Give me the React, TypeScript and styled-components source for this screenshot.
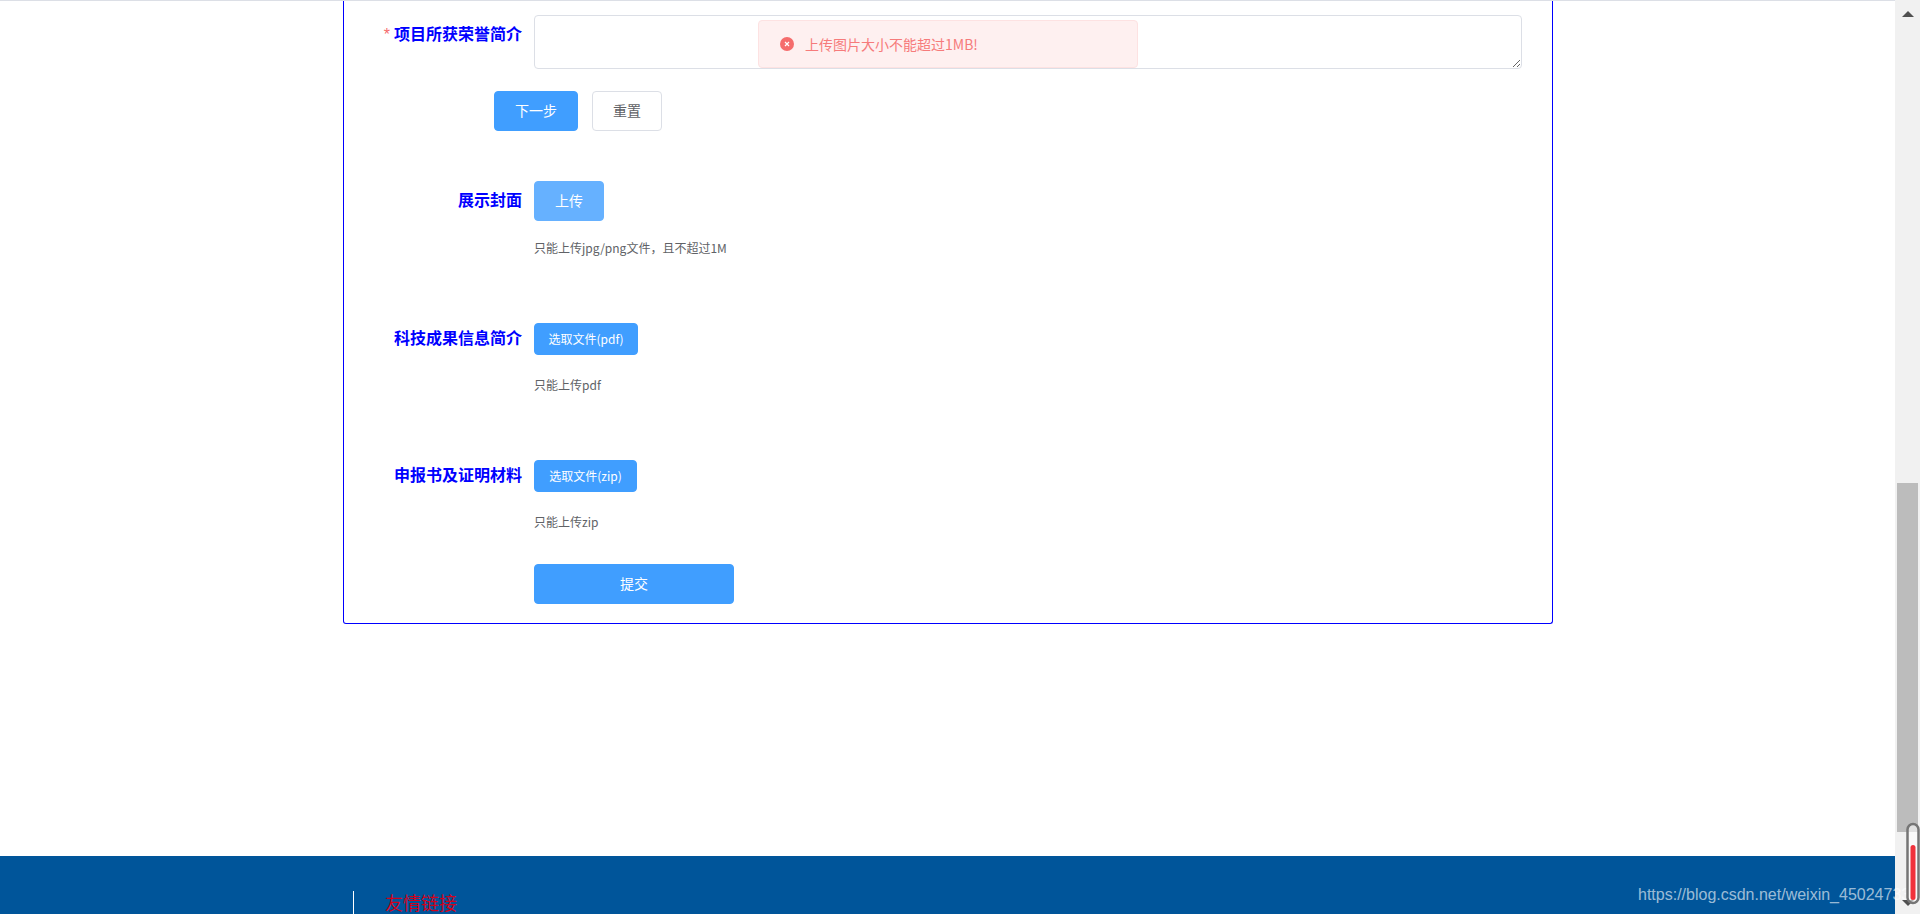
import styled, { createGlobalStyle } from 'styled-components';

const GlobalStyle = createGlobalStyle`
  html, body {
    margin: 0;
    padding: 0;
    height: 100%;
    overflow: hidden;
    background: #fff;
    font-family: "Noto Sans CJK SC", "Noto Sans", sans-serif;
  }
`;

const Page = styled.div`
  position: relative;
  display: flex;
  width: 1920px;
  height: 914px;
  overflow: hidden;
`;

const Main = styled.div`
  flex: 1;
  display: flex;
  flex-direction: column;
  border-top: 1px solid #dcdfe6;
`;

const Card = styled.div`
  box-sizing: border-box;
  width: 1210px;
  margin-left: 343px;
  padding: 14px 30px 19px 0;
  border: 1px solid #0000ff;
  border-top: none;
  border-radius: 0 0 3px 3px;
`;

const Row = styled.div<{ $top?: boolean; $mt?: number }>`
  display: flex;
  align-items: ${(p) => (p.$top ? 'flex-start' : 'center')};
  margin-top: ${(p) => p.$mt ?? 0}px;
`;

const Label = styled.label`
  box-sizing: border-box;
  flex: 0 0 190px;
  padding: 0 12px 3px 0;
  text-align: right;
  font-size: 16px;
  font-weight: 700;
  line-height: 37px;
  color: #0000ff;
`;

const Star = styled.span`
  margin-right: 4px;
  font-family: "Liberation Sans", sans-serif;
  font-weight: 400;
  color: #f56c6c;
`;

const TextArea = styled.textarea`
  box-sizing: border-box;
  display: block;
  flex: 1;
  height: 54px;
  padding: 5px 15px;
  border: 1px solid #dcdfe6;
  border-radius: 4px;
  outline: none;
  background: #fff;
  font-family: inherit;
  font-size: 14px;
`;

const Actions = styled.div`
  display: flex;
  gap: 14px;
  margin-top: 22px;
  padding-left: 150px;
`;

const Button = styled.button<{ $kind?: 'primary' | 'plain' | 'faded'; $w: number; $h?: number; $small?: boolean }>`
  box-sizing: border-box;
  width: ${(p) => p.$w}px;
  height: ${(p) => p.$h ?? 40}px;
  padding: 0 0 2px;
  border: 1px solid
    ${(p) => (p.$kind === 'plain' ? '#dcdfe6' : p.$kind === 'faded' ? '#66b1ff' : '#409eff')};
  border-radius: 4px;
  background: ${(p) => (p.$kind === 'plain' ? '#fff' : p.$kind === 'faded' ? '#66b1ff' : '#409eff')};
  color: ${(p) => (p.$kind === 'plain' ? '#606266' : '#fff')};
  font-family: inherit;
  font-size: ${(p) => (p.$small ? 12 : 14)}px;
`;

const Hint = styled.div<{ $mt: number }>`
  margin-top: ${(p) => p.$mt}px;
  padding-left: 190px;
  font-size: 12px;
  line-height: 20px;
  color: #606266;
`;

const SubmitRow = styled.div`
  margin-top: 32px;
  padding-left: 190px;
`;

const Footer = styled.div`
  flex: 1;
  margin-top: auto;
  max-height: 58px;
  min-height: 58px;
  padding: 35px 0 0 353px;
  box-sizing: border-box;
  background: #00559a;
  overflow: hidden;
`;

const FooterTitle = styled.div`
  padding-left: 31px;
  border-left: 1px solid #fff;
  font-family: "Liberation Serif", "Noto Sans CJK SC", serif;
  font-size: 18px;
  line-height: 26px;
  color: #d0021b;
`;

const ScrollTrack = styled.div`
  position: relative;
  flex: 0 0 25px;
  background: #f1f1f1;
`;

const Arrow = styled.div<{ $down?: boolean; $top: number }>`
  position: absolute;
  top: ${(p) => p.$top}px;
  left: 6.5px;
  width: 0;
  height: 0;
  border-left: 6px solid transparent;
  border-right: 6px solid transparent;
  ${(p) => (p.$down ? 'border-top: 6px solid #505050;' : 'border-bottom: 6px solid #505050;')}
`;

const Thumb = styled.div`
  position: absolute;
  top: 483px;
  left: 2px;
  width: 21px;
  height: 349px;
  background: #bcbcbc;
`;

const Message = styled.div`
  position: absolute;
  top: 20px;
  left: 758px;
  box-sizing: border-box;
  display: flex;
  align-items: center;
  gap: 11px;
  width: 380px;
  height: 48px;
  padding-left: 21px;
  border: 1px solid #fde2e2;
  border-radius: 4px;
  background: #fef0f0;
  color: #f67b7b;
  font-size: 14px;
`;

const Watermark = styled.div`
  position: absolute;
  top: 884px;
  left: 1638px;
  font-family: "Liberation Sans", sans-serif;
  font-size: 16px;
  line-height: 22px;
  white-space: nowrap;
  color: rgba(255, 255, 255, 0.62);
`;

const Gauge = styled.svg`
  position: absolute;
  top: 822px;
  left: 1906px;
`;

const ErrorIcon = () => (
  <svg width="14" height="14" viewBox="0 0 14 14">
    <circle cx="7" cy="7" r="7" fill="#f56c6c" />
    <path d="M5 5l4 4M9 5l-4 4" stroke="#fff" strokeWidth="1.2" />
  </svg>
);

const App = () => {
  return (
    <Page>
      <GlobalStyle />
      <Main>
        <Card>
          <Row $top>
            <Label>
              <Star>*</Star>项目所获荣誉简介
            </Label>
            <TextArea />
          </Row>
          <Actions>
            <Button $kind="primary" $w={84}>下一步</Button>
            <Button $kind="plain" $w={70}>重置</Button>
          </Actions>

          <Row $mt={50}>
            <Label>展示封面</Label>
            <Button $kind="faded" $w={70}>上传</Button>
          </Row>
          <Hint $mt={17}>只能上传jpg/png文件，且不超过1M</Hint>

          <Row $mt={61}>
            <Label>科技成果信息简介</Label>
            <Button $kind="primary" $w={104} $h={32} $small>选取文件(pdf)</Button>
          </Row>
          <Hint $mt={16}>只能上传pdf</Hint>

          <Row $mt={61}>
            <Label>申报书及证明材料</Label>
            <Button $kind="primary" $w={103} $h={32} $small>选取文件(zip)</Button>
          </Row>
          <Hint $mt={16}>只能上传zip</Hint>

          <SubmitRow>
            <Button $kind="primary" $w={200}>提交</Button>
          </SubmitRow>
        </Card>
        <Footer>
          <FooterTitle>友情链接</FooterTitle>
        </Footer>
      </Main>
      <ScrollTrack>
        <Arrow $top={11} />
        <Thumb />
        <Arrow $down $top={900} />
      </ScrollTrack>
      <Message>
        <ErrorIcon />
        上传图片大小不能超过1MB!
      </Message>
      <Watermark>https://blog.csdn.net/weixin_45024733</Watermark>
      <Gauge width="14" height="84" viewBox="0 0 14 84">
        <rect x="1.5" y="2" width="11" height="79" rx="5.5" fill="rgba(255,255,255,0.55)" stroke="#757575" strokeWidth="2.5" />
        <rect x="4.5" y="23" width="5" height="55" rx="2.5" fill="#f0323c" />
      </Gauge>
    </Page>
  );
};

export default App;
